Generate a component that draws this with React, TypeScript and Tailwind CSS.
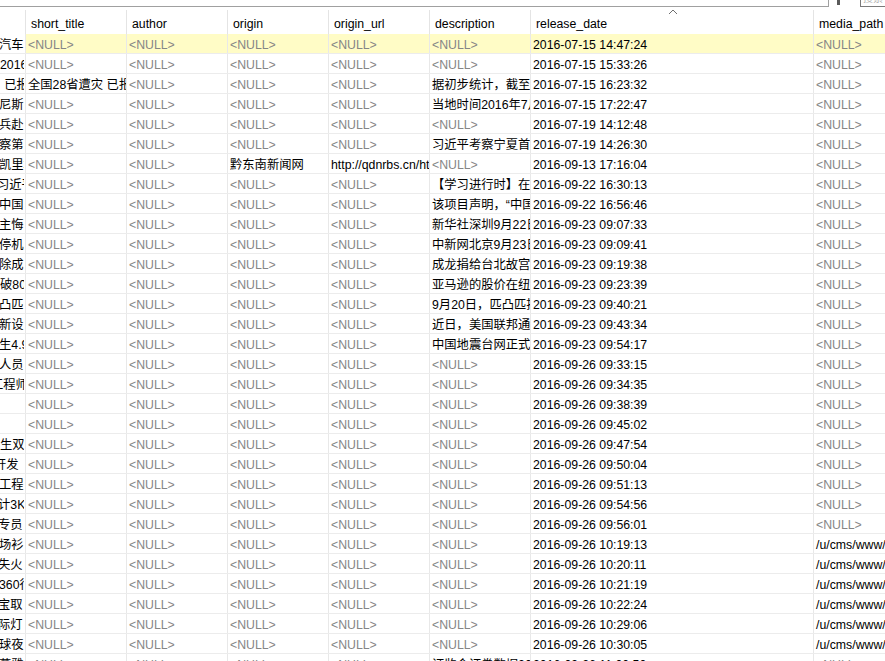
import React from 'react'

type Row = {
  lead: string
  leadOffset: number
  cells: (string | null)[]
}

const N = null

const columns = [
  { key: 'short_title', width: 101 },
  { key: 'author', width: 101 },
  { key: 'origin', width: 101 },
  { key: 'origin_url', width: 101 },
  { key: 'description', width: 101 },
  { key: 'release_date', width: 283 },
  { key: 'media_path', width: 140 },
]

const widthClass: Record<number, string> = {
  101: 'w-[101px]',
  283: 'w-[283px]',
  140: 'w-[140px]',
}

const leads: [string, number][] = [
  ['汽车', -1],
  ['2016年', 0],
  ['，已报', -8],
  ['尼斯', -1],
  ['兵赴', -1],
  ['察第', -1],
  ['凯里地', -1],
  ['习近平', -3],
  ['中国', -1],
  ['主悔', -1],
  ['停机', -1],
  ['除成', -1],
  ['破80', 0],
  ['凸匹', -1],
  ['新设', -1],
  ['生4.9', -1],
  ['人员', -1],
  ['工程师', -9],
  ['', 0],
  ['', 0],
  ['生双', 0],
  ['开发', -6],
  ['工程师', -1],
  ['计3K', -2],
  ['专员', -2],
  ['场衫', -1],
  ['失火', -2],
  ['360行', -1],
  ['宝取', -2],
  ['际灯', -2],
  ['球夜', -1],
  ['慕雅', -1],
]

const descriptions: (string | null)[] = [
  N, N, '据初步统计，截至', '当地时间2016年7月', N, '习近平考察宁夏首',
  N, '【学习进行时】在', '该项目声明，“中国', '新华社深圳9月22日', '中新网北京9月23日',
  '成龙捐给台北故宫', '亚马逊的股价在纽', '9月20日，匹凸匹持', '近日，美国联邦通',
  '中国地震台网正式',
]

const dates = [
  '2016-07-15 14:47:24', '2016-07-15 15:33:26', '2016-07-15 16:23:32', '2016-07-15 17:22:47',
  '2016-07-19 14:12:48', '2016-07-19 14:26:30', '2016-09-13 17:16:04', '2016-09-22 16:30:13',
  '2016-09-22 16:56:46', '2016-09-23 09:07:33', '2016-09-23 09:09:41', '2016-09-23 09:19:38',
  '2016-09-23 09:23:39', '2016-09-23 09:40:21', '2016-09-23 09:43:34', '2016-09-23 09:54:17',
  '2016-09-26 09:33:15', '2016-09-26 09:34:35', '2016-09-26 09:38:39', '2016-09-26 09:45:02',
  '2016-09-26 09:47:54', '2016-09-26 09:50:04', '2016-09-26 09:51:13', '2016-09-26 09:54:56',
  '2016-09-26 09:56:01', '2016-09-26 10:19:13', '2016-09-26 10:20:11', '2016-09-26 10:21:19',
  '2016-09-26 10:22:24', '2016-09-26 10:29:06', '2016-09-26 10:30:05', '2016-09-26 11:00:50',
]

const rows: Row[] = dates.map((date, i) => {
  let description = descriptions[i] ?? null
  if (i === 31) description = '证监会证券数据2016'
  return {
    lead: leads[i][0],
    leadOffset: leads[i][1],
    cells: [
      i === 2 ? '全国28省遭灾 已报' : N,
      N,
      i === 6 ? '黔东南新闻网' : N,
      i === 6 ? 'http://qdnrbs.cn/html' : N,
      description,
      date,
      i >= 25 && i <= 30 ? '/u/cms/www/201609' : N,
    ],
  }
})

function Cell({ value, width }: { value: string | null; width: number }) {
  return (
    <div className={`${widthClass[width]} shrink-0 h-full border-r border-[#e8e8e8] overflow-hidden`}>
      <div className="pl-[2px] pr-[2px] pt-[3px] h-full flex items-center overflow-hidden whitespace-nowrap">
        {value === null ? (
          <span className="text-[#858585]">&lt;NULL&gt;</span>
        ) : (
          <span className="text-black">{value}</span>
        )}
      </div>
    </div>
  )
}

export default function App() {
  return (
    <div
      className="w-[885px] h-[661px] overflow-hidden bg-white text-[12.3px] leading-none"
      style={{ fontFamily: '"Liberation Sans", "Noto Sans CJK SC", sans-serif' }}
    >
      {/* toolbar remnant */}
      <div className="h-[7px] flex">
        <div className="w-[829px] shrink-0 border-b border-r border-[#a0a0a0]" />
        <div className="w-[8px] shrink-0" />
        <div className="w-[3px] h-[5px] bg-[#5a5a5a]" />
        <div className="w-[20px] shrink-0" />
        <div className="flex-1 border-l border-b border-[#7a7a7a] overflow-hidden">
          <div className="text-[10px] text-[#b0b0b0] leading-none -mt-[6px] pl-[2px]">搜索</div>
        </div>
      </div>

      {/* header */}
      <div className="h-[27px] flex pt-[3px]">
        <div className="w-[26px] shrink-0 h-full border-r border-[#e4e4e4]" />
        {columns.map((c) => (
          <div
            key={c.key}
            className={`${widthClass[c.width]} shrink-0 h-full border-r border-[#e4e4e4] relative flex items-center pl-[5px] pt-[4px] whitespace-nowrap text-black`}
          >
            {c.key === 'release_date' && (
              <svg className="absolute left-[137px] -top-[1px]" width="10" height="6" viewBox="0 0 10 6">
                <path d="M1 5 L5 1 L9 5" fill="none" stroke="#6f6f6f" strokeWidth="1" />
              </svg>
            )}
            {c.key}
          </div>
        ))}
      </div>

      {/* rows */}
      {rows.map((r, i) => (
        <div
          key={i}
          className={`h-[20px] flex border-b border-[#ececec] ${i === 0 ? 'bg-[#fffcc6]' : 'bg-white'}`}
        >
          <div className="w-[26px] shrink-0 h-full border-r border-[#e8e8e8] bg-white overflow-hidden">
            <div className="w-[24px] h-full pt-[3px] overflow-hidden flex items-center whitespace-nowrap">
              <span className="text-black" style={{ marginLeft: r.leadOffset }}>
                {r.lead}
              </span>
            </div>
          </div>
          {columns.map((c, j) => (
            <Cell key={c.key} value={r.cells[j]} width={c.width} />
          ))}
        </div>
      ))}
    </div>
  )
}
